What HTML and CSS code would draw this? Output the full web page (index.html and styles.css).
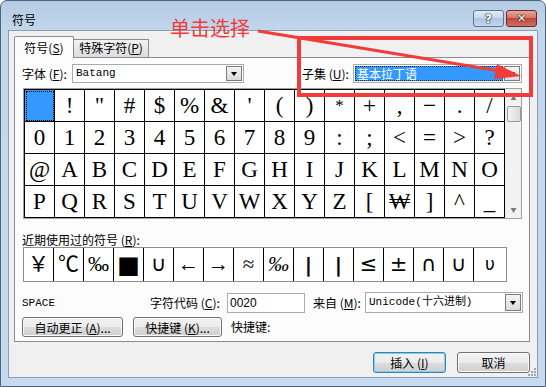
FILE: index.html
```html
<!DOCTYPE html>
<html lang="zh-CN">
<head>
    <meta charset="UTF-8">
    <title>符号</title>
    <link rel="stylesheet" href="styles.css">
</head>
<body>
    <div class="window">
        <!-- Title bar -->
        <div class="titlebar">
            <span class="title">符号</span>
            <div class="caption-btns">
                <span class="cap-btn help">?</span>
                <span class="cap-btn close">✕</span>
            </div>
        </div>

        <div class="client">
            <div class="tabs">
                <div class="tab active">符号(<u>S</u>)</div>
                <div class="tab">特殊字符(<u>P</u>)</div>
            </div>

            <div class="panel">
                <!-- Font / subset -->
                <div class="row top-row">
                    <span class="label font-label">字体 (<u>F</u>):</span>
                    <div class="combo font-combo">
                        <span class="combo-text mono">Batang</span>
                        <span class="drop"></span>
                    </div>
                    <span class="label subset-label">子集 (<u>U</u>):</span>
                    <div class="combo subset-combo">
                        <span class="combo-text picked">基本拉丁语</span>
                        <span class="drop"></span>
                    </div>
                </div>

                <!-- Symbol grid -->
                <div class="chars">
                    <div class="char-grid">
                        <span class="cell current"></span><span class="cell">!</span><span class="cell">&quot;</span><span class="cell">#</span>
                        <span class="cell">$</span><span class="cell">%</span><span class="cell">&amp;</span><span class="cell">'</span>
                        <span class="cell">(</span><span class="cell">)</span><span class="cell small-star">*</span><span class="cell">+</span>
                        <span class="cell">,</span><span class="cell">−</span><span class="cell">.</span><span class="cell">/</span>

                        <span class="cell">0</span><span class="cell">1</span><span class="cell">2</span><span class="cell">3</span>
                        <span class="cell">4</span><span class="cell">5</span><span class="cell">6</span><span class="cell">7</span>
                        <span class="cell">8</span><span class="cell">9</span><span class="cell">:</span><span class="cell">;</span>
                        <span class="cell">&lt;</span><span class="cell">=</span><span class="cell">&gt;</span><span class="cell">?</span>

                        <span class="cell">@</span><span class="cell">A</span><span class="cell">B</span><span class="cell">C</span>
                        <span class="cell">D</span><span class="cell">E</span><span class="cell">F</span><span class="cell">G</span>
                        <span class="cell">H</span><span class="cell">I</span><span class="cell">J</span><span class="cell">K</span>
                        <span class="cell">L</span><span class="cell">M</span><span class="cell">N</span><span class="cell">O</span>

                        <span class="cell">P</span><span class="cell">Q</span><span class="cell">R</span><span class="cell">S</span>
                        <span class="cell">T</span><span class="cell">U</span><span class="cell">V</span><span class="cell">W</span>
                        <span class="cell">X</span><span class="cell">Y</span><span class="cell">Z</span><span class="cell">[</span>
                        <span class="cell">₩</span><span class="cell">]</span><span class="cell">^</span><span class="cell">_</span>
                    </div>
                    <div class="scrollbar">
                        <span class="sb-arrow">▲</span>
                        <span class="sb-thumb"></span>
                        <span class="sb-space"></span>
                        <span class="sb-arrow">▼</span>
                    </div>
                </div>

                <!-- Recently used -->
                <div class="label recent-label">近期使用过的符号 (<u>R</u>):</div>
                <div class="recent">
                    <span class="rcell">￥</span><span class="rcell">℃</span><span class="rcell">‰</span><span class="rcell square">■</span>
                    <span class="rcell sans">∪</span><span class="rcell">←</span><span class="rcell">→</span><span class="rcell">≈</span>
                    <span class="rcell italic">‰</span><span class="rcell sans bar">|</span><span class="rcell sans bar">|</span><span class="rcell sans">≤</span>
                    <span class="rcell sans">±</span><span class="rcell sans">∩</span><span class="rcell sans">∪</span><span class="rcell sans small">υ</span>
                </div>

                <!-- Code row -->
                <div class="row info-row">
                    <span class="space-name mono">SPACE</span>
                    <span class="label code-label">字符代码 (<u>C</u>):</span>
                    <span class="text-input">0020</span>
                    <span class="label from-label">来自 (<u>M</u>):</span>
                    <div class="combo from-combo">
                        <span class="combo-text mono">Unicode(十六进制)</span>
                        <span class="drop"></span>
                    </div>
                </div>

                <div class="row btn-row">
                    <span class="btn autocorrect">自动更正 (<u>A</u>)...</span>
                    <span class="btn shortcut">快捷键 (<u>K</u>)...</span>
                    <span class="label shortcut-label">快捷键:</span>
                </div>
            </div>

            <div class="footer">
                <span class="btn dlg-btn default">插入 (<u>I</u>)</span>
                <span class="btn dlg-btn">取消</span>
            </div>

            <svg class="grip" width="10" height="10" viewBox="0 0 10 10">
                <rect x="8" y="2" width="2" height="2" fill="#a3a8ae"/>
                <rect x="5" y="5" width="2" height="2" fill="#a3a8ae"/>
                <rect x="8" y="5" width="2" height="2" fill="#a3a8ae"/>
                <rect x="2" y="8" width="2" height="2" fill="#a3a8ae"/>
                <rect x="5" y="8" width="2" height="2" fill="#a3a8ae"/>
                <rect x="8" y="8" width="2" height="2" fill="#a3a8ae"/>
            </svg>
        </div>

        <!-- Red note drawn over the screenshot -->
        <div class="annotation">
            <svg width="546" height="387" viewBox="0 0 546 387">
                <rect x="299" y="38" width="232" height="57" fill="none" stroke="#f23b3b" stroke-width="4"/>
                <line x1="258" y1="31" x2="500" y2="71" stroke="#f23b3b" stroke-width="3"/>
                <polygon points="521,76 497,64 494,79" fill="#f23b3b"/>
            </svg>
            <span class="note">单击选择</span>
        </div>
    </div>
</body>
</html>
```

FILE: styles.css
```css
* {
    box-sizing: border-box;
}

body {
    margin: 0;
    font-family: "Noto Sans CJK SC", "Liberation Sans", sans-serif;
    font-size: 12px;
    color: #000;
    background: #fff;
}

u {
    text-decoration: underline;
}

.window {
    position: relative;
    width: 546px;
    height: 387px;
    border: 1px solid #4f6379;
    border-radius: 7px 7px 0 0;
    background: linear-gradient(to bottom, #b4cbe4 0, #c2d7ed 30px, #c6daef 100%);
    overflow: hidden;
}

/* Title bar */
.titlebar {
    height: 29px;
    display: flex;
    justify-content: space-between;
    align-items: flex-start;
    padding: 0 8px 0 11px;
}

.title {
    margin-top: 12px;
    line-height: 14px;
}

.caption-btns {
    display: flex;
    gap: 2px;
    margin-top: 9px;
}

.cap-btn {
    width: 31px;
    height: 17px;
    border-radius: 3px;
    display: flex;
    align-items: center;
    justify-content: center;
    color: #fff;
    font-family: "DejaVu Sans", sans-serif;
    font-weight: bold;
    font-size: 12px;
    text-shadow: 0 0 1px #1d2633, 0 0 1px #1d2633, 0 0 2px #1d2633;
}

.help {
    border: 1px solid #5e7690;
    background: linear-gradient(to bottom, #e2ecf7 0%, #c9daee 45%, #aec5e0 50%, #c4d7ee 100%);
}

.close {
    font-size: 11px;
    border: 1px solid #6a2a22;
    background: linear-gradient(to bottom, #e8a89d 0%, #d57566 45%, #c1463a 50%, #d17060 100%);
}

/* Client area */
.client {
    position: relative;
    margin: 0 7px;
    height: 348px;
    background: #f0f0f0;
    border: 1px solid #8a9db2;
    padding: 5px 7px 0 5px;
}

.tabs {
    display: flex;
    align-items: flex-start;
    height: 22px;
    margin-bottom: -1px;
}

.tab {
    border: 1px solid #898c95;
    border-bottom: none;
    line-height: 16px;
    text-align: center;
    white-space: nowrap;
}

.tab.active {
    position: relative;
    z-index: 1;
    width: 60px;
    height: 22px;
    padding-top: 3px;
    background: #fcfcfc;
    border-radius: 2px 2px 0 0;
}

.tab:not(.active) {
    width: 76px;
    height: 18px;
    margin-top: 3px;
    margin-left: -1px;
    background: linear-gradient(to bottom, #f2f2f2, #dcdcdc);
}

.panel {
    height: 285px;
    border: 1px solid #898c95;
    background: #fcfcfc;
    padding: 6px 0 0 7px;
}

.row {
    display: flex;
    align-items: center;
}

.label {
    white-space: nowrap;
    line-height: 14px;
}

.mono {
    font-family: "Liberation Mono", monospace;
    font-size: 11px;
}

/* Combos */
.top-row {
    height: 19px;
}

.font-label {
    width: 50px;
}

.subset-label {
    width: 51px;
    margin-left: 58px;
}

.combo {
    display: flex;
    height: 19px;
    border: 1px solid #a9abb1;
    background: #fff;
    padding: 1px;
}

.font-combo {
    width: 172px;
}

.subset-combo {
    width: 169px;
}

.from-combo {
    width: 158px;
    height: 21px;
}

.combo-text {
    flex: 1;
    line-height: 15px;
    padding-left: 2px;
    white-space: nowrap;
    overflow: hidden;
}

.combo-text.picked {
    background: #3399ff;
    color: #fff;
    outline: 1px dotted #222;
    outline-offset: -1px;
    margin-right: 1px;
}

.from-combo .combo-text {
    line-height: 17px;
}

.drop {
    position: relative;
    width: 16px;
    border: 1px solid #7c7c7c;
    background: linear-gradient(to bottom, #f4f4f4, #dadada);
}

.drop::after {
    content: "";
    position: absolute;
    left: 4px;
    top: 50%;
    margin-top: -2px;
    border-left: 3px solid transparent;
    border-right: 3px solid transparent;
    border-top: 4px solid #000;
}

/* Symbol grid */
.chars {
    display: flex;
    width: 499px;
    margin: 5px 0 0 1px;
    border: 1px solid #a0a0a0;
}

.char-grid {
    display: grid;
    grid-template-columns: repeat(16, 30px);
    grid-auto-rows: 32px;
    border-top: 1px solid #000;
    border-left: 1px solid #000;
    background: #fff;
}

.cell {
    display: flex;
    align-items: center;
    justify-content: center;
    border-right: 1px solid #000;
    border-bottom: 1px solid #000;
    font-family: "Liberation Serif", "DejaVu Serif", serif;
    font-size: 23px;
    line-height: 1;
}

.cell.current {
    background: #3399ff;
    outline: 1px dotted #000;
    outline-offset: -2px;
}

.cell.small-star {
    font-size: 17px;
    align-items: flex-start;
    padding-top: 7px;
}

.scrollbar {
    width: 16px;
    display: flex;
    flex-direction: column;
    align-items: center;
    background: #f2f2f2;
    border-left: 1px solid #ececec;
}

.sb-arrow {
    height: 17px;
    font-size: 6px;
    line-height: 17px;
    color: #777;
}

.sb-thumb {
    width: 14px;
    height: 16px;
    border: 1px solid #979797;
    border-radius: 2px;
    background: linear-gradient(to right, #f2f2f2, #dcdcdc);
}

.sb-space {
    flex: 1;
}

/* Recently used */
.recent-label {
    height: 15px;
    margin-top: 13px;
    line-height: 15px;
}

.recent {
    display: flex;
    width: 484px;
    height: 35px;
    margin-left: 1px;
    border: 1px solid #8e8f8f;
    background: #fff;
}

.rcell {
    width: 30px;
    display: flex;
    align-items: center;
    justify-content: center;
    border-right: 1px solid #000;
    font-family: "Liberation Serif", "Noto Sans CJK SC", serif;
    font-size: 21px;
    line-height: 1;
    color: #000;
}

.rcell:last-child {
    width: 32px;
    border-right: none;
}

.rcell.sans {
    font-family: "DejaVu Sans", sans-serif;
    font-size: 21px;
}

.rcell.bar {
    font-weight: bold;
    font-size: 20px;
}

.rcell.small {
    font-size: 17px;
}

.rcell.square {
    font-family: "DejaVu Sans", sans-serif;
    font-size: 24px;
}

.rcell.italic {
    font-style: italic;
}

/* Code row */
.info-row {
    height: 21px;
    margin-top: 10px;
}

.space-name {
    width: 128px;
}

.code-label {
    width: 77px;
}

.text-input {
    width: 78px;
    height: 20px;
    border: 1px solid #a9abb1;
    background: #fff;
    padding-left: 2px;
    line-height: 18px;
    font-family: "Liberation Sans", sans-serif;
}

.from-label {
    width: 52px;
    margin-left: 8px;
}

/* Buttons */
.btn-row {
    height: 20px;
    margin-top: 4px;
}

.btn {
    display: flex;
    align-items: center;
    justify-content: center;
    height: 20px;
    border: 1px solid #707070;
    border-radius: 3px;
    background: linear-gradient(to bottom, #f2f2f2 0%, #ebebeb 50%, #dddddd 51%, #cfcfcf 100%);
    box-shadow: inset 0 0 0 1px #fbfbfb;
    white-space: nowrap;
}

.autocorrect {
    width: 101px;
}

.shortcut {
    width: 89px;
    margin-left: 10px;
}

.shortcut-label {
    margin-left: 9px;
}

.footer {
    display: flex;
    justify-content: flex-end;
    gap: 11px;
    margin-top: 10px;
}

.dlg-btn {
    width: 73px;
    height: 21px;
}

.dlg-btn.default {
    border-color: #3c7fb1;
    box-shadow: inset 0 0 0 1px #7ed0f5;
}

.grip {
    position: absolute;
    right: 1px;
    bottom: 1px;
}

/* Annotation overlay */
.annotation {
    position: absolute;
    left: -1px;
    top: -1px;
    width: 546px;
    height: 387px;
    pointer-events: none;
}

.annotation svg {
    position: absolute;
    left: 0;
    top: 0;
}

.note {
    position: absolute;
    left: 170px;
    top: 15px;
    font-size: 20px;
    line-height: 26px;
    color: #f23b3b;
}
```
